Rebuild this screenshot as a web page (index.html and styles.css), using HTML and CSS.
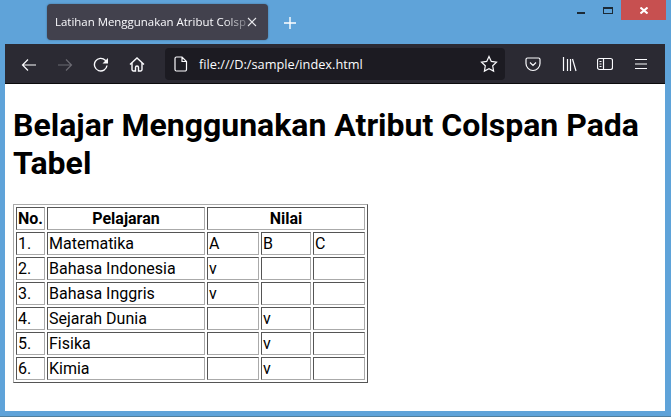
FILE: index.html
```html
<!DOCTYPE html>
<html lang="id">
<head>
<meta charset="utf-8">
<title>Latihan Menggunakan Atribut Colspan</title>
<link rel="stylesheet" href="styles.css">
</head>
<body>
<div class="window">
  <div class="titlebar">
    <div class="tab">
      <span class="tab-title">Latihan Menggunakan Atribut Colsp</span>
      <svg class="tab-close" width="10" height="10" viewBox="0 0 10 10"><path d="M1 1l8 8M9 1l-8 8"/></svg>
    </div>
    <svg class="new-tab" width="12" height="12" viewBox="0 0 12 12"><path d="M6 0v12M0 6h12"/></svg>
    <div class="win-controls">
      <svg class="win-min" width="8" height="2" viewBox="0 0 8 2"><path d="M0 1h8"/></svg>
      <svg class="win-max" width="10" height="7" viewBox="0 0 10 7"><rect x=".5" y=".5" width="9" height="6"/><path d="M0 1.500h10"/></svg>
      <div class="win-close"><svg width="8" height="7" viewBox="0 0 8 7"><path d="M.5.5l7 6M7.500.5l-7 6"/></svg></div>
    </div>
  </div>
  <div class="toolbar">
    <div class="nav">
      <svg class="ico" width="16" height="16" viewBox="0 -1 16 16"><path d="M15 8H1.500M7 2.500L1.500 8 7 13.500"/></svg>
      <svg class="ico dim" width="16" height="16" viewBox="0 -1 16 16"><path d="M1 8h13.500M9 2.500L14.500 8 9 13.500"/></svg>
      <svg class="ico thick" width="16" height="16" viewBox="0 -1 16 16"><path d="M14 8.500A6.300 6.300 0 1 1 12.300 3.300L14 5.500"/><path class="solid" d="M15 1v5.500H9.500z"/></svg>
      <svg class="ico thick" width="16" height="16" viewBox="0 -1 16 16"><path d="M1 7.500l7-6.500 7 6.500M3 6v6.500A1.500 1.500 0 0 0 4.500 14H6.500v-3.500a1.500 1.500 0 0 1 3 0V14h2a1.500 1.500 0 0 0 1.500-1.500V6"/></svg>
    </div>
    <div class="urlbar">
      <svg class="ico page" width="14" height="16" viewBox="0 0 14 16"><path d="M2.500 1h5.500l4.500 4.500v8a1.500 1.500 0 0 1-1.500 1.500H2.500A1.500 1.500 0 0 1 1 13.500v-11A1.500 1.500 0 0 1 2.500 1zM8 1v4.500h4.500"/></svg>
      <span class="url">file:///D:/sample/index.html</span>
      <svg class="ico star" width="18" height="18" viewBox="0 0 18 18"><path d="M9 1.500l2.300 4.900 5.200.7-3.800 3.700.9 5.300L9 13.600l-4.600 2.500.9-5.300L1.500 7.100l5.200-.7z"/></svg>
    </div>
    <div class="tools">
      <svg class="ico pocket" width="16" height="16" viewBox="0 0 16 16"><path d="M2.500 2h11A1.500 1.500 0 0 1 15 3.500v4a7 7 0 0 1-14 0v-4A1.500 1.500 0 0 1 2.500 2zM5 6.500l3 3 3-3"/></svg>
      <svg class="ico library" width="16" height="16" viewBox="0 0 16 16"><path d="M1.500 1v14M5.500 3v12M8.500 3v12M10.500 3l3.500 12"/></svg>
      <svg class="ico sidebar" width="16" height="16" viewBox="0 0 16 16"><rect x=".5" y="2.500" width="15" height="11" rx="2"/><path d="M6.500 2.500v11M2.500 5.500h2M2.500 8h2M2.500 10.500h2"/></svg>
      <svg class="ico menu" width="14" height="12" viewBox="0 0 14 12"><path d="M1 1.500h12M1 6h12M1 10.500h12"/></svg>
    </div>
  </div>
  <main class="page-body">
    <h1>Belajar Menggunakan Atribut Colspan Pada Tabel</h1>
    <table class="grades">
      <tr><th class="col-no">No.</th><th class="col-name">Pelajaran</th><th colspan="3">Nilai</th></tr>
      <tr><td>1.</td><td>Matematika</td><td class="col-a">A</td><td class="col-b">B</td><td class="col-c">C</td></tr>
      <tr><td>2.</td><td>Bahasa Indonesia</td><td>v</td><td></td><td></td></tr>
      <tr><td>3.</td><td>Bahasa Inggris</td><td>v</td><td></td><td></td></tr>
      <tr><td>4.</td><td>Sejarah Dunia</td><td></td><td>v</td><td></td></tr>
      <tr><td>5.</td><td>Fisika</td><td></td><td>v</td><td></td></tr>
      <tr><td>6.</td><td>Kimia</td><td></td><td>v</td><td></td></tr>
    </table>
  </main>
</div>
</body>
</html>
```
FILE: styles.css
```css
* { box-sizing: border-box; }
html, body { margin: 0; height: 100%; overflow: hidden; }
body { background: #5fa3d9; }
.window { height: 417px; display: flex; flex-direction: column; border-bottom: 1px solid #4f7f9f; }

.titlebar { height: 44px; flex: none; display: flex; align-items: flex-start; padding-left: 47px; }
.tab { width: 221px; height: 36px; margin-top: 4px; background: #42414d; border-radius: 4px; display: flex; align-items: center; padding: 0 8px; box-shadow: 0 0 2px rgba(0,0,0,.35); }
.tab-title { width: 192px; flex: none; overflow: hidden; white-space: nowrap; font: 11.45px/16px "Open Sans", sans-serif; color: #fbfbfe; -webkit-mask-image: linear-gradient(to right, #000 88%, rgba(0,0,0,.25)); mask-image: linear-gradient(to right, #000 88%, rgba(0,0,0,.25)); }
.tab-close { fill: none; stroke: #e8e8ec; stroke-width: 1.1; margin-left: 0; }
.new-tab { fill: none; stroke: #fff; stroke-width: 1.4; margin: 17px 0 0 16px; }
.win-controls { margin-left: auto; margin-right: 5px; display: flex; align-items: flex-start; }
.win-min { fill: none; stroke: #1c2a36; stroke-width: 2; margin: 12px 18px 0 0; }
.win-max { fill: none; stroke: #1c2a36; margin: 7px 8px 0 0; }
.win-close { width: 45px; height: 20px; background: #c75050; display: flex; align-items: center; justify-content: center; }
.win-close svg { fill: none; stroke: #fff; stroke-width: 2; }

.toolbar { height: 40px; flex: none; margin: 0 6px 0 5px; background: #2b2a33; border-bottom: 1px solid #0c0c0d; display: flex; align-items: center; padding-top: 1px; }
.ico { fill: none; stroke: #fbfbfe; stroke-width: 1.2; flex: none; }
.ico.thick { stroke-width: 1.4; }
.ico .solid { fill: #fbfbfe; stroke: none; }
.ico.dim { stroke: #6b6a72; }
.nav { width: 160px; flex: none; display: flex; align-items: center; gap: 20px; padding-left: 16px; }
.urlbar { width: 340px; height: 32px; flex: none; background: #1c1b22; border-radius: 4px; display: flex; align-items: center; padding: 0 7px 0 9px; }
.url { flex: 1; margin-left: 11px; font: 12.75px/16px "Open Sans", sans-serif; color: #fbfbfe; }
.tools { flex: 1; display: flex; align-items: center; }
.pocket { margin-left: 20px; }
.library { margin-left: 21px; }
.sidebar { margin-left: 19px; }
.menu { margin-left: 21px; }

.page-body { flex: none; height: 327px; margin: 0 6px 0 5px; background: #fff; color: #000; padding: 1px 8px; font-family: Roboto, sans-serif; font-size: 16px; overflow: hidden; }
h1 { font-size: 32px; font-weight: 700; margin: 22px 0 22px; line-height: 37.5px; }
.grades { border: 1px solid; border-color: #aaa #555 #555 #aaa; border-spacing: 2px; border-collapse: separate; }
.grades th, .grades td { border: 1px solid; border-color: #555 #aaa #aaa #555; padding: 1px; line-height: 19px; height: 23px; }
.grades td { text-align: left; }
.col-no { width: 29px; }
.col-name { width: 158px; }
.col-a { width: 52px; }
.col-b { width: 50px; }
.col-c { width: 52px; }
```
